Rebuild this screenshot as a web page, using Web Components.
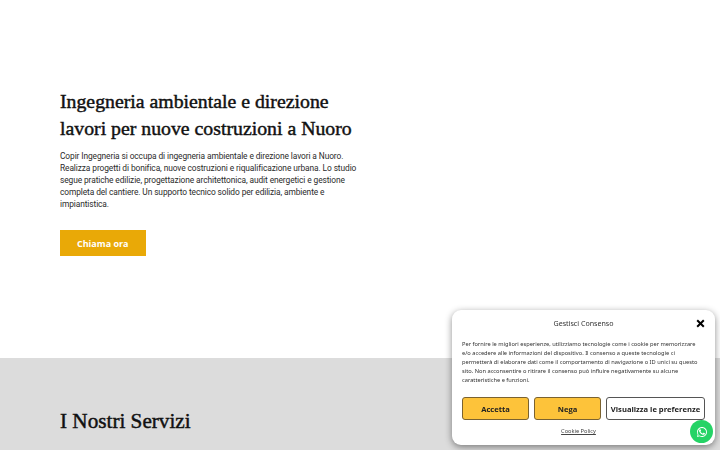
<!DOCTYPE html>
<html lang="it">
<head>
<meta charset="utf-8">
<title>Copir Ingegneria</title>
<style>
  html, body { margin: 0; height: 450px; overflow: hidden; background: #fff; }
</style>
</head>
<body>
<hero-section>
  <span slot="title">Ingegneria ambientale e direzione<br>lavori per nuove costruzioni a Nuoro</span>
  Copir Ingegneria si occupa di ingegneria ambientale e direzione lavori a Nuoro. Realizza progetti di bonifica, nuove costruzioni e riqualificazione urbana. Lo studio segue pratiche edilizie, progettazione architettonica, audit energetici e gestione completa del cantiere. Un supporto tecnico solido per edilizia, ambiente e impiantistica.
</hero-section>
<services-section></services-section>
<cookie-banner></cookie-banner>
<whatsapp-button></whatsapp-button>

<script>
class HeroSection extends HTMLElement {
    constructor() {
        super();
        this.attachShadow({ mode: 'open' });
        this.shadowRoot.innerHTML = `
      <style>
        :host {
          display: flex;
          flex-direction: column;
          align-items: flex-start;
          height: 358px;
          box-sizing: border-box;
          padding: 88px 0 0 60px;
        }
        h1 {
          margin: 0 0 8px;
          font: 400 19.8px/27px "Liberation Serif", serif;
          -webkit-text-stroke: 0.45px #111;
          color: #111;
        }
        p {
          margin: 0 0 20px;
          width: 299px;
          font: 400 8.4px/12px Roboto, sans-serif;
          letter-spacing: -0.1px;
          color: #2b2b2b;
        }
        a {
          display: flex;
          align-items: center;
          justify-content: center;
          width: 85.5px;
          height: 26px;
          background: #e9a907;
          color: #fff;
          font: 700 9px "Open Sans", sans-serif;
          text-decoration: none;
        }
      </style>
      <h1><slot name="title"></slot></h1>
      <p><slot></slot></p>
      <a href="#">Chiama ora</a>
    `;
    }
}

class ServicesSection extends HTMLElement {
    constructor() {
        super();
        this.attachShadow({ mode: 'open' });
        this.shadowRoot.innerHTML = `
      <style>
        :host {
          display: block;
          height: 92px;
          box-sizing: border-box;
          padding: 50px 0 0 60px;
          background: #dcdcdc;
        }
        h2 {
          margin: 0;
          font: 400 21.2px/26px "Liberation Serif", serif;
          -webkit-text-stroke: 0.45px #111;
          color: #111;
        }
      </style>
      <h2>I Nostri Servizi</h2>
    `;
    }
}

class CookieBanner extends HTMLElement {
    constructor() {
        super();
        this.attachShadow({ mode: 'open' });
        this.shadowRoot.innerHTML = `
      <style>
        :host {
          position: fixed;
          left: 452px;
          top: 310px;
          width: 263px;
          height: 135px;
          box-sizing: border-box;
          padding: 8px 10px 0;
          display: flex;
          flex-direction: column;
          background: #fff;
          border-radius: 9px;
          box-shadow: 0 2px 7px rgba(0, 0, 0, 0.45);
          font-family: "Noto Sans", sans-serif;
          color: #333;
        }
        header {
          display: flex;
          align-items: center;
          justify-content: center;
          height: 9px;
          margin-bottom: 13px;
          position: relative;
          font-size: 7.1px;
        }
        header svg { position: absolute; right: 0; top: 1px; }
        p {
          margin: 0 0 12px;
          padding-right: 6px;
          font-size: 5.7px;
          line-height: 9px;
        }
        .buttons { display: flex; gap: 5px; }
        button {
          height: 23px;
          padding: 0;
          border: 1px solid #7a6230;
          border-radius: 3px;
          background: #fdc33a;
          color: #222;
          font: 700 7.6px "Open Sans", sans-serif;
          flex: 0 0 67px;
        }
        button.alt {
          flex: 0 0 99px;
          background: #fff;
          border-color: #555;
        }
        a {
          margin: 7px 10px 0 0;
          align-self: center;
          font-size: 5.65px;
          color: #444;
        }
      </style>
      <header>
        <span>Gestisci Consenso</span>
        <svg width="9" height="9" viewBox="0 0 9 9"><path d="M1.2 1.2 7.8 7.8M7.8 1.2 1.2 7.8" stroke="#000" stroke-width="2" fill="none"/></svg>
      </header>
      <p>Per fornire le migliori esperienze, utilizziamo tecnologie come i cookie per memorizzare e/o accedere alle informazioni del dispositivo. Il consenso a queste tecnologie ci permetterà di elaborare dati come il comportamento di navigazione o ID unici su questo sito. Non acconsentire o ritirare il consenso può influire negativamente su alcune caratteristiche e funzioni.</p>
      <div class="buttons">
        <button>Accetta</button>
        <button>Nega</button>
        <button class="alt">Visualizza le preferenze</button>
      </div>
      <a href="#">Cookie Policy</a>
    `;
    }
}

class WhatsappButton extends HTMLElement {
    constructor() {
        super();
        this.attachShadow({ mode: 'open' });
        this.shadowRoot.innerHTML = `
      <style>
        :host {
          position: fixed;
          left: 690px;
          top: 420px;
          width: 23px;
          height: 23px;
          display: flex;
          align-items: center;
          justify-content: center;
          border-radius: 50%;
          background: #25d366;
        }
      </style>
      <svg width="12" height="12" viewBox="0 0 24 24"><path fill="#fff" d="M17.5 14.4c-.3-.1-1.8-.9-2-1-.3-.1-.5-.1-.7.2-.2.3-.8 1-.9 1.200-.2.2-.3.2-.6.1-.3-.2-1.300-.5-2.400-1.500-.9-.8-1.500-1.800-1.700-2.100-.2-.3 0-.5.100-.6l.5-.5c.1-.2.2-.3.3-.5.100-.2 0-.4 0-.5-.1-.2-.7-1.700-1-2.300-.2-.6-.5-.5-.7-.5h-.6c-.2 0-.5.100-.8.400-.3.300-1 1-1 2.500s1.100 2.900 1.200 3.100c.2.200 2.100 3.200 5.100 4.500.7.300 1.300.5 1.700.6.700.2 1.400.2 1.900.1.600-.1 1.800-.7 2-1.400.2-.7.2-1.300.2-1.400-.1-.1-.3-.2-.6-.3zM12 2C6.500 2 2 6.500 2 12c0 1.800.5 3.500 1.300 5L2 22l5.200-1.300C8.600 21.500 10.300 22 12 22c5.500 0 10-4.500 10-10S17.500 2 12 2zm0 18.200c-1.600 0-3.100-.4-4.400-1.200l-.3-.2-3.100.8.800-3-.2-.3C3.900 15 3.500 13.500 3.800 12 3.800 7.500 7.500 3.800 12 3.800s8.200 3.700 8.200 8.200-3.700 8.200-8.200 8.200z"/></svg>
    `;
    }
}

customElements.define('hero-section', HeroSection);
customElements.define('services-section', ServicesSection);
customElements.define('cookie-banner', CookieBanner);
customElements.define('whatsapp-button', WhatsappButton);
</script>
</body>
</html>
